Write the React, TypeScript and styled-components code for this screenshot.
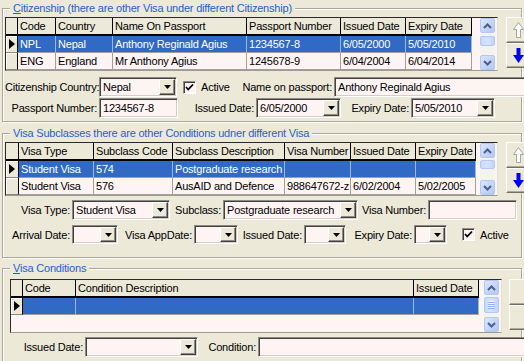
import React from "react";
import styled, { createGlobalStyle } from "styled-components";

const Global = createGlobalStyle`
  html, body { margin: 0; padding: 0; background: #ECE9D8; }
  body {
    width: 524px; height: 361px; overflow: hidden;
    font-family: "Liberation Sans", Arial, sans-serif;
    font-size: 11px; letter-spacing: -0.2px; color: #000;
  }
  * { box-sizing: border-box; }
`;

const Page = styled.div`
  width: 524px;
  height: 361px;
  overflow: hidden;
  padding: 1px 0 0 2px;
  display: flex;
  flex-direction: column;
`;

const Group = styled.fieldset<{ $mt: number; $pt: number; $pb: number }>`
  flex-shrink: 0;
  width: 520px;
  min-width: 0;
  margin: ${(p) => p.$mt}px 0 0 0;
  padding: ${(p) => p.$pt}px 0 ${(p) => p.$pb}px 2px;
  border: 1px solid #aca899;
  box-shadow: inset 1px 1px 0 #fff, 1px 1px 0 #fff;
`;

const Legend = styled.legend`
  margin-left: 5px;
  padding: 0 3px;
  height: 14px;
  line-height: 14px;
  color: #1f5fcf;
  background: #ece9d8;
  white-space: nowrap;
  u { text-decoration: underline; }
`;

const TableRow = styled.div`
  display: flex;
  align-items: flex-start;
`;

const GridBox = styled.div<{ $w: number; $ml: number }>`
  display: flex;
  width: ${(p) => p.$w}px;
  height: 54px;
  margin-left: ${(p) => p.$ml}px;
  border: 1px solid;
  border-color: #2a2a2a #e4e1d4 #9d9b90 #2a2a2a;
  background: #fff4f4;
  flex-shrink: 0;
`;

const Table = styled.div<{ $cols: string }>`
  display: grid;
  grid-template-columns: ${(p) => p.$cols};
  grid-template-rows: 18px;
  grid-auto-rows: 17px;
  align-content: start;
`;

const HeadCell = styled.div`
  height: 18px;
  line-height: 16px;
  padding: 0 2px;
  background: #ece9d8;
  border-right: 1px solid #000;
  border-bottom: 2px solid #000;
  white-space: nowrap;
  overflow: hidden;
`;

const IndCell = styled.div`
  display: flex;
  align-items: center;
  justify-content: center;
  background: #ece9d8;
  border-right: 1px solid #000;
  border-bottom: 1px solid #8a887e;
  box-shadow: inset 1px 1px 0 #fff;
`;

const Cell = styled.div<{ $sel: boolean }>`
  line-height: 16px;
  padding: 0 2px;
  white-space: nowrap;
  overflow: hidden;
  background: ${(p) => (p.$sel ? "#316ac5" : "#fff4f4")};
  color: ${(p) => (p.$sel ? "#fff" : "#000")};
  border-right: 1px solid ${(p) => (p.$sel ? "#9db6e2" : "#a0a0a0")};
  border-bottom: 1px solid #a0a0a0;
`;

const Scroll = styled.div`
  margin-left: auto;
  margin-right: 2px;
  width: 15px;
  height: 52px;
  display: flex;
  flex-direction: column;
  background: #f4f3ee;
`;

const ScrollBtn = styled.div`
  width: 15px;
  height: 15px;
  border: 1px solid #b4c8f6;
  border-radius: 2px;
  background: linear-gradient(135deg, #dbe6ff 0%, #c1d3fb 60%, #b2c7f4 100%);
  display: flex;
  align-items: center;
  justify-content: center;
`;

const Thumb = styled.div<{ $h: number; $mt: number }>`
  width: 15px;
  height: ${(p) => p.$h}px;
  margin-top: ${(p) => p.$mt}px;
  border: 1px solid #b4c8f6;
  border-radius: 2px;
  background: linear-gradient(90deg, #c9d8fc 0%, #d7e2fe 50%, #c2d3fb 100%);
  display: flex;
  align-items: center;
  justify-content: center;
`;

const Track = styled.div`
  flex: 1;
`;

const SideBtns = styled.div<{ $ml: number }>`
  display: flex;
  flex-direction: column;
  margin-left: ${(p) => p.$ml}px;
  flex-shrink: 0;
`;

const SideBtn = styled.div<{ $h: number }>`
  width: 24px;
  height: ${(p) => p.$h}px;
  background: #ece9d8;
  border: 1px solid;
  border-color: #fff #716f64 #716f64 #fff;
  box-shadow: inset -1px -1px 0 #aca899;
  display: flex;
  align-items: center;
  justify-content: center;
`;

const FormRow = styled.div<{ $mt: number; $h: number }>`
  display: flex;
  align-items: center;
  height: ${(p) => p.$h}px;
  margin-top: ${(p) => p.$mt}px;
`;

const Label = styled.span<{ $w: number }>`
  flex-shrink: 0;
  width: ${(p) => p.$w}px;
  margin-right: 2px;
  text-align: right;
  white-space: nowrap;
`;

const Field = styled.div<{ $w: number }>`
  flex-shrink: 0;
  display: flex;
  align-items: stretch;
  width: ${(p) => p.$w}px;
  height: 100%;
  background: #fff4f4;
  border: 1px solid;
  border-color: #8e8c82 #fff #fff #8e8c82;
  box-shadow: inset 1px 1px 0 #404040, inset -1px -1px 0 #d4d0c8;
`;

const FieldText = styled.span`
  flex: 1;
  padding: 0 0 0 3px;
  line-height: 16px;
  white-space: nowrap;
  overflow: hidden;
  align-self: center;
`;

const DropBtn = styled.div`
  width: 16px;
  margin: 1px 1px 1px 0;
  background: #ece9d8;
  border: 1px solid;
  border-color: #fff #404040 #404040 #fff;
  box-shadow: inset -1px -1px 0 #8e8c82;
  display: flex;
  align-items: center;
  justify-content: center;
`;

const CheckBox = styled.div<{ $ml: number }>`
  flex-shrink: 0;
  width: 13px;
  height: 13px;
  margin-left: ${(p) => p.$ml}px;
  background: #fff4f4;
  border: 1px solid;
  border-color: #8e8c82 #fff #fff #8e8c82;
  box-shadow: inset 1px 1px 0 #404040;
  display: flex;
  align-items: center;
  justify-content: center;
`;

const CheckText = styled.span<{ $w: number }>`
  flex-shrink: 0;
  width: ${(p) => p.$w}px;
  margin-left: 5px;
  white-space: nowrap;
`;

const Chevron = ({ up }: { up: boolean }) => (
  <svg width="9" height="6" viewBox="0 0 9 6">
    <path
      d={up ? "M1 5 L4.5 1.5 L8 5" : "M1 1 L4.5 4.5 L8 1"}
      stroke="#4d6185"
      strokeWidth="2"
      fill="none"
    />
  </svg>
);

const Grip = () => (
  <svg width="7" height="8" viewBox="0 0 7 8">
    {[0, 2, 4, 6].map((y) => (
      <g key={y}>
        <rect x="0" y={y} width="7" height="1" fill="#eef4fe" />
        <rect x="0" y={y + 1} width="7" height="1" fill="#8cb0f8" />
      </g>
    ))}
  </svg>
);

const RowPointer = () => (
  <svg width="6" height="10" viewBox="0 0 6 10">
    <polygon points="0,0 6,5 0,10" fill="#000" />
  </svg>
);

const UpArrow = () => (
  <svg width="11" height="16" viewBox="0 0 11 16">
    <polygon
      points="5.5,0.5 10.5,7.5 7.5,7.5 7.5,15.5 3.5,15.5 3.5,7.5 0.5,7.5"
      fill="#fdfdfb"
      stroke="#a7a69c"
    />
  </svg>
);

const DownArrow = () => (
  <svg width="11" height="16" viewBox="0 0 11 16">
    <polygon points="3.5,0 7.5,0 7.5,7 11,7 5.5,15 0,7 3.5,7" fill="#0000ff" />
  </svg>
);

const DropTriangle = () => (
  <svg width="7" height="4" viewBox="0 0 7 4">
    <polygon points="0,0 7,0 3.5,4" fill="#000" />
  </svg>
);

const CheckMark = () => (
  <svg width="9" height="9" viewBox="0 0 9 9">
    <path d="M1 4 L3.2 6.5 L8 1.5" stroke="#000" strokeWidth="1.8" fill="none" />
  </svg>
);

type GridProps = {
  w: number;
  ml: number;
  cols: { w: number; label: string }[];
  rows: string[][];
  sel: number;
  thumbH: number;
  thumbMt: number;
  grip?: boolean;
};

const DataGrid = ({ w, ml, cols, rows, sel, thumbH, thumbMt, grip }: GridProps) => {
  const template = cols.map((c) => `${c.w}px`).join(" ");
  return (
    <GridBox $w={w} $ml={ml}>
      <Table $cols={template}>
        {cols.map((c, i) => (i === 0 ? <HeadCell key={i} /> : <HeadCell key={i}>{c.label}</HeadCell>))}
        {rows.map((r, ri) => (
          <React.Fragment key={ri}>
            <IndCell>{ri === sel ? <RowPointer /> : null}</IndCell>
            {r.map((v, ci) => (
              <Cell key={ci} $sel={ri === sel}>
                {v}
              </Cell>
            ))}
          </React.Fragment>
        ))}
      </Table>
      <Scroll>
        <ScrollBtn>
          <Chevron up />
        </ScrollBtn>
        <Thumb $h={thumbH} $mt={thumbMt}>{grip ? <Grip /> : null}</Thumb>
        <Track />
        <ScrollBtn>
          <Chevron up={false} />
        </ScrollBtn>
      </Scroll>
    </GridBox>
  );
};

const Sides = ({ ml, arrows }: { ml: number; arrows: boolean }) => (
  <SideBtns $ml={ml}>
    <SideBtn $h={26}>{arrows ? <UpArrow /> : null}</SideBtn>
    <SideBtn $h={25}>{arrows ? <DownArrow /> : null}</SideBtn>
  </SideBtns>
);

const Select = ({ w, value }: { w: number; value?: string }) => (
  <Field $w={w}>
    <FieldText>{value ?? ""}</FieldText>
    <DropBtn>
      <DropTriangle />
    </DropBtn>
  </Field>
);

const Input = ({ w, value }: { w: number; value?: string }) => (
  <Field $w={w}>
    <FieldText>{value ?? ""}</FieldText>
  </Field>
);

const Check = ({ ml, w }: { ml: number; w: number }) => (
  <>
    <CheckBox $ml={ml}>
      <CheckMark />
    </CheckBox>
    <CheckText $w={w}>Active</CheckText>
  </>
);

export default function App() {
  return (
    <>
      <Global />
      <Page>
        <Group $mt={0} $pt={2} $pb={3}>
          <Legend>
            <u>C</u>itizenship (there are other Visa under different Citizenship)
          </Legend>
          <TableRow>
            <DataGrid
              w={493}
              ml={0}
              cols={[
                { w: 12, label: "" },
                { w: 38, label: "Code" },
                { w: 57, label: "Country" },
                { w: 134, label: "Name On Passport" },
                { w: 94, label: "Passport Number" },
                { w: 65, label: "Issued Date" },
                { w: 66, label: "Expiry Date" },
              ]}
              rows={[
                ["NPL", "Nepal", "Anthony Reginald Agius", "1234567-8", "6/05/2000", "5/05/2010"],
                ["ENG", "England", "Mr Anthony Agius", "1245678-9", "6/04/2004", "6/04/2014"],
              ]}
              sel={0}
              thumbH={10}
              thumbMt={3}
            />
            <Sides ml={8} arrows />
          </TableRow>
          <FormRow $mt={6} $h={20}>
            <Label $w={92}>Citizenship Country:</Label>
            <Select w={78} value="Nepal" />
            <Check ml={6} w={39} />
            <Label $w={92}>Name on passport:</Label>
            <Input w={200} value="Anthony Reginald Agius" />
          </FormRow>
          <FormRow $mt={1} $h={20}>
            <Label $w={92}>Passport Number:</Label>
            <Input w={79} value="1234567-8" />
            <Label $w={76}>Issued Date:</Label>
            <Select w={85} value="6/05/2000" />
            <Label $w={68}>Expiry Date:</Label>
            <Select w={84} value="5/05/2010" />
          </FormRow>
        </Group>

        <Group $mt={4} $pt={2} $pb={13}>
          <Legend>Visa Subclasses there are other Conditions udner different Visa</Legend>
          <TableRow>
            <DataGrid
              w={493}
              ml={0}
              cols={[
                { w: 13, label: "" },
                { w: 75, label: "Visa Type" },
                { w: 79, label: "Subclass Code" },
                { w: 112, label: "Subclass Description" },
                { w: 66, label: "Visa Number" },
                { w: 65, label: "Issued Date" },
                { w: 60, label: "Expiry Date" },
              ]}
              rows={[
                ["Student Visa", "574", "Postgraduate research", "", "", ""],
                ["Student Visa", "576", "AusAID and Defence", "988647672-z", "6/02/2004", "5/02/2005"],
              ]}
              sel={0}
              thumbH={9}
              thumbMt={2}
            />
            <Sides ml={8} arrows />
          </TableRow>
          <FormRow $mt={4} $h={20}>
            <Label $w={65}>Visa Type:</Label>
            <Select w={98} value="Student Visa" />
            <Label $w={51}>Subclass:</Label>
            <Select w={135} value="Postgraduate research" />
            <Label $w={68}>Visa Number:</Label>
            <Input w={89} />
          </FormRow>
          <FormRow $mt={5} $h={19}>
            <Label $w={65}>Arrival Date:</Label>
            <Select w={46} />
            <Label $w={74}>Visa AppDate:</Label>
            <Select w={44} />
            <Label $w={64}>Issued Date:</Label>
            <Select w={42} />
            <Label $w={66}>Expiry Date:</Label>
            <Select w={33} />
            <Check ml={15} w={40} />
          </FormRow>
        </Group>

        <Group $mt={3} $pt={4} $pb={10}>
          <Legend>
            <u>V</u>isa Conditions
          </Legend>
          <TableRow>
            <DataGrid
              w={492}
              ml={5}
              cols={[
                { w: 12, label: "" },
                { w: 53, label: "Code" },
                { w: 338, label: "Condition Description" },
                { w: 65, label: "Issued Date" },
              ]}
              rows={[["", "", ""]]}
              sel={0}
              thumbH={16}
              thumbMt={2}
              grip
            />
            <Sides ml={7} arrows={false} />
          </TableRow>
          <FormRow $mt={4} $h={20}>
            <Label $w={78}>Issued Date:</Label>
            <Select w={113} />
            <Label $w={58}>Condition:</Label>
            <Input w={300} />
          </FormRow>
        </Group>
      </Page>
    </>
  );
}
